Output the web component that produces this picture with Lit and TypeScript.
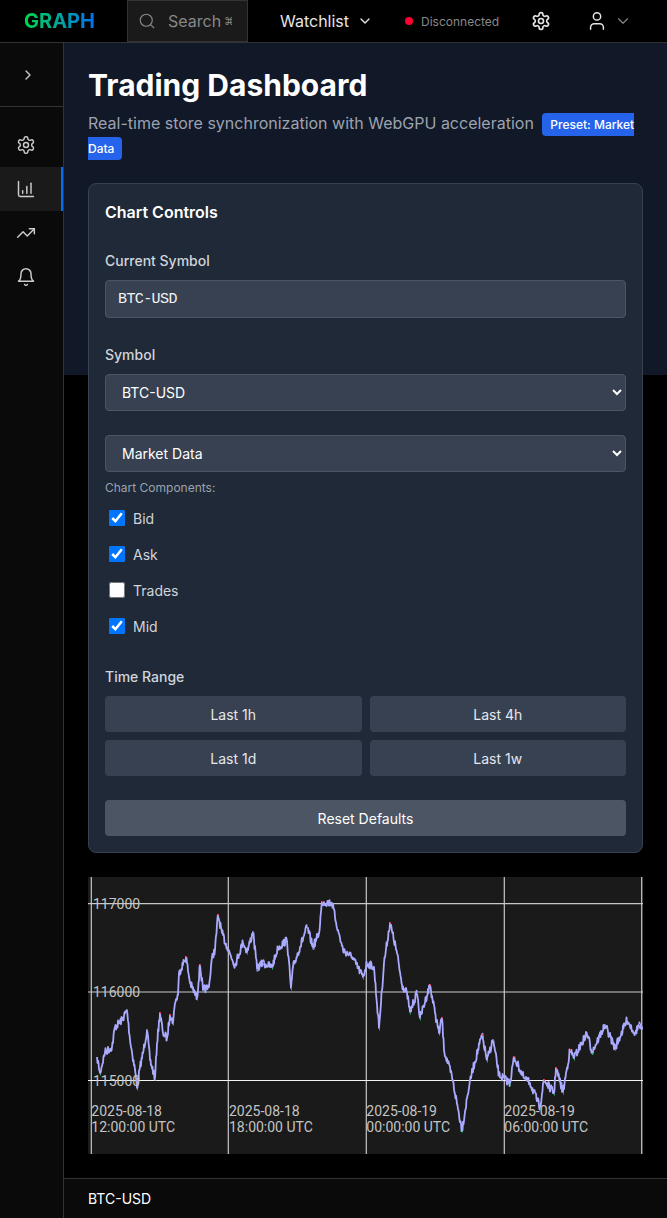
import { LitElement, css, html, svg } from 'lit';
import { customElement } from 'lit/decorators.js';

// hand-traced from the price line, in chart-local px
const TRACE: [number, number][] = [
  [9, 180], [12, 196], [17, 175], [24, 170], [27, 150], [34, 143], [39, 133], [42, 163], [47, 193], [49, 211],
  [52, 190], [55, 176], [59, 153], [62, 183], [67, 201], [69, 166], [72, 136], [75, 156], [79, 161], [82, 138],
  [85, 146], [87, 126], [90, 118], [91, 96], [98, 80], [102, 106], [109, 121], [112, 88], [115, 113], [121, 110],
  [124, 80], [127, 73], [130, 38], [134, 56], [139, 70], [147, 88], [155, 65], [159, 75], [165, 55], [169, 91],
  [175, 86], [184, 90], [190, 71], [199, 63], [203, 111], [205, 90], [212, 70], [219, 50], [225, 70], [231, 56],
  [234, 25], [244, 26], [250, 53], [255, 73], [264, 80], [275, 100], [279, 86], [286, 90], [291, 151], [296, 86],
  [302, 46], [309, 76], [314, 108], [319, 116], [322, 135], [329, 116], [332, 141], [342, 108], [347, 136],
  [351, 156], [354, 141], [356, 173], [364, 200], [374, 253], [382, 203], [394, 158], [399, 183], [405, 163],
  [411, 198], [422, 206], [426, 180], [436, 201], [442, 206], [452, 230], [456, 203], [466, 216], [468, 191],
  [475, 215], [482, 173], [486, 181], [499, 156], [504, 175], [517, 148], [527, 171], [539, 143], [547, 156],
  [551, 148], [555, 156],
];

function noisyLine(): string {
  let seed = 7;
  const rnd = () => {
    seed = (seed * 16807) % 2147483647;
    return seed / 2147483647 - 0.5;
  };
  const pts: string[] = [];
  for (let i = 0; i < TRACE.length - 1; i++) {
    const [x0, y0] = TRACE[i];
    const [x1, y1] = TRACE[i + 1];
    const steps = Math.max(2, Math.round(x1 - x0) * 2);
    for (let s = 0; s < steps; s++) {
      const t = s / steps;
      const x = x0 + (x1 - x0) * t;
      const y = y0 + (y1 - y0) * t + rnd() * 8 * (s === 0 ? 0 : 1);
      pts.push(`${x.toFixed(1)},${y.toFixed(1)}`);
    }
  }
  return pts.join(' ');
}

const GEAR = svg`<path d="M12.22 2h-.44a2 2 0 0 0-2 2v.18a2 2 0 0 1-1 1.73l-.43.25a2 2 0 0 1-2 0l-.15-.08a2 2 0 0 0-2.73.73l-.22.38a2 2 0 0 0 .73 2.73l.15.1a2 2 0 0 1 1 1.72v.51a2 2 0 0 1-1 1.74l-.15.09a2 2 0 0 0-.73 2.73l.22.38a2 2 0 0 0 2.73.73l.15-.08a2 2 0 0 1 2 0l.43.25a2 2 0 0 1 1 1.73V20a2 2 0 0 0 2 2h.44a2 2 0 0 0 2-2v-.18a2 2 0 0 1 1-1.73l.43-.25a2 2 0 0 1 2 0l.15.08a2 2 0 0 0 2.73-.73l.22-.39a2 2 0 0 0-.73-2.73l-.15-.08a2 2 0 0 1-1-1.74v-.5a2 2 0 0 1 1-1.74l.15-.09a2 2 0 0 0 .73-2.73l-.22-.38a2 2 0 0 0-2.73-.73l-.15.08a2 2 0 0 1-2 0l-.43-.25a2 2 0 0 1-1-1.73V4a2 2 0 0 0-2-2z"/><circle cx="12" cy="12" r="3"/>`;
const CHEVRON_DOWN = svg`<path d="m6 9 6 6 6-6"/>`;

@customElement('app-root')
export class AppRoot extends LitElement {
  static override styles = css`
    :host {
      display: block;
      background: #000;
      color: #fff;
      font-family: Inter, 'Noto Sans', sans-serif;
      min-height: 1218px;
    }
    * {
      box-sizing: border-box;
    }
    svg.icon {
      fill: none;
      stroke: currentColor;
      stroke-width: 2;
      stroke-linecap: round;
      stroke-linejoin: round;
      display: block;
      flex: none;
    }

    header {
      height: 43px;
      border-bottom: 1px solid #333;
      display: flex;
      align-items: center;
      background: #000;
    }
    .logo {
      width: 127px;
      padding-left: 24px;
      font-size: 20px;
      font-weight: 700;
    }
    .logo span {
      background: linear-gradient(90deg, #00d84a, #0070f3);
      -webkit-background-clip: text;
      background-clip: text;
      color: transparent;
    }
    .search {
      width: 121px;
      height: 42px;
      background: #1a1a1a;
      border: 1px solid #333;
      display: flex;
      align-items: center;
      padding-left: 10px;
      gap: 12px;
      color: #888;
      font-size: 16px;
      overflow: hidden;
      white-space: nowrap;
    }
    .search .kbd {
      margin-left: -9px;
      font-size: 11px;
      width: 8px;
      overflow: hidden;
      flex: none;
    }
    .watch {
      margin-left: 32px;
      display: flex;
      align-items: center;
      gap: 8px;
      color: #e5e5e5;
      font-size: 16px;
      width: 125px;
    }
    .status {
      display: flex;
      align-items: center;
      gap: 8px;
      font-size: 12px;
      color: #888;
      width: 126px;
    }
    .dot {
      width: 8px;
      height: 8px;
      border-radius: 50%;
      background: #ff0033;
    }
    .gear {
      color: #e5e5e5;
      width: 55px;
    }
    .user {
      display: flex;
      align-items: center;
      gap: 6px;
      color: #e5e5e5;
    }
    .user .chev {
      color: #888;
    }

    .body {
      display: flex;
      height: 1175px;
    }
    .side {
      width: 64px;
      background: #0a0a0a;
      border-right: 1px solid #333;
      flex: none;
      color: #ccc;
    }
    .toggle {
      height: 64px;
      border-bottom: 1px solid #333;
      display: flex;
      align-items: center;
      padding-left: 20px;
      margin-bottom: 16px;
    }
    .nav {
      height: 44px;
      display: flex;
      align-items: center;
      padding-left: 16px;
    }
    .nav.active {
      background: #1a1a1a;
      border-right: 2px solid #0070f3;
    }

    main {
      flex: 1;
      min-width: 0;
      display: flex;
      flex-direction: column;
      background: linear-gradient(#111827, #111827) no-repeat top / 100% 332px;
    }
    .content {
      flex: 1;
      padding: 24px 24px 0;
    }
    h1 {
      margin: 0;
      font-size: 30px;
      line-height: 36px;
      font-weight: 700;
    }
    .sub {
      margin: 8px 0 24px;
      color: #9ca3af;
      font-size: 16px;
      line-height: 24px;
    }
    .badge {
      margin-left: 4px;
      padding: 4px 8px;
      background: #2563eb;
      color: #fff;
      font-size: 12px;
      line-height: 16px;
      font-weight: 500;
      border-radius: 4px;
    }

    .card {
      background: #1f2937;
      border: 1px solid #374151;
      border-radius: 8px;
      padding: 16px;
      height: 670px;
    }
    h2 {
      margin: 0 0 27px;
      font-size: 16px;
      line-height: 24px;
      font-weight: 600;
    }
    label.field {
      display: block;
      font-size: 14px;
      line-height: 20px;
      font-weight: 500;
      color: #d1d5db;
      margin-bottom: 9px;
    }
    .value {
      height: 38px;
      background: #374151;
      border: 1px solid #4b5563;
      border-radius: 4px;
      padding: 0 12px;
      display: flex;
      align-items: center;
      font-family: 'Liberation Mono', monospace;
      font-size: 15px;
      letter-spacing: -0.6px;
      color: #f3f4f6;
      margin-bottom: 27px;
    }
    select {
      display: block;
      width: 100%;
      height: 37px;
      background: #374151;
      border: 1px solid #4b5563;
      border-radius: 4px;
      padding: 0 12px;
      color: #fff;
      font-family: inherit;
      font-size: 14px;
      font-weight: 400;
    }
    .gap {
      margin-bottom: 24px;
    }
    .hint {
      font-size: 12px;
      line-height: 16px;
      color: #9ca3af;
      margin: 8px 0 12px;
    }
    .checks {
      display: flex;
      flex-direction: column;
      gap: 16px;
      padding-left: 4px;
      margin-bottom: 31px;
    }
    .checks label {
      display: flex;
      align-items: center;
      gap: 8px;
      height: 20px;
      font-size: 14px;
      color: #d1d5db;
    }
    .checks input {
      width: 16px;
      height: 16px;
      margin: 0;
    }
    .range {
      display: grid;
      grid-template-columns: 1fr 1fr;
      gap: 8px;
      margin-bottom: 24px;
    }
    button {
      height: 36px;
      border: none;
      border-radius: 4px;
      background: #374151;
      color: #e5e7eb;
      font-family: inherit;
      font-size: 14px;
      padding: 0;
    }
    button.reset {
      display: block;
      width: 100%;
      background: #4b5563;
      color: #fff;
      font-weight: 400;
    }

    .chart {
      display: block;
      margin-top: 24px;
      width: 555px;
      height: 277px;
      background: #1a1a1a;
    }
    .chart text {
      font-family: Roboto, sans-serif;
      font-size: 14px;
      fill: #c4c4c4;
    }

    footer {
      height: 40px;
      background: #0a0a0a;
      border-top: 1px solid #333;
      padding: 0 24px;
      display: flex;
      align-items: center;
      font-size: 14px;
      font-weight: 400;
      color: #fff;
    }
  `;

  private icon(size: number, body: unknown, stroke = 2) {
    return html`<svg class="icon" width=${size} height=${size} viewBox="0 0 24 24" style="stroke-width:${stroke}">${body}</svg>`;
  }

  private renderChart() {
    const hLines = [
      { y: 26.7, label: '117000', color: '#c8c8c8' },
      { y: 115, label: '116000', color: '#c8c8c8' },
      { y: 203.5, label: '115000', color: '#f4f4f4' },
    ];
    const vLines = [
      { x: 3.3, tx: 3.3, date: '2025-08-18', time: '12:00:00 UTC' },
      { x: 140.3, tx: 141, date: '2025-08-18', time: '18:00:00 UTC' },
      { x: 278.3, tx: 278.3, date: '2025-08-19', time: '00:00:00 UTC' },
      { x: 416.3, tx: 416.3, date: '2025-08-19', time: '06:00:00 UTC' },
      { x: 553.7, tx: 553.7, date: '', time: '' },
    ];
    // tiny bid/ask ticks on the local extremes of the line
    const ticks = TRACE.slice(1, -1).flatMap(([x, y], i) => {
      const prev = TRACE[i][1];
      const next = TRACE[i + 2][1];
      if (y < prev && y < next) return [{ x, y: y - 1, c: '#e0304a' }];
      if (y > prev && y > next) return [{ x, y: y + 1, c: '#20b060' }];
      return [];
    });
    return html`<svg class="chart" viewBox="0 0 555 277" width="555" height="277">
      ${vLines.map(
        (v) => svg`<line x1=${v.x} x2=${v.x} y1="0" y2="277" stroke="#c8c8c8" stroke-width="1.2"></line>`,
      )}
      ${hLines.map(
        (h) => svg`<line x1="0" x2="555" y1=${h.y} y2=${h.y} stroke=${h.color} stroke-width="1.2"></line>`,
      )}
      <polyline points=${noisyLine()} fill="none" stroke="#aaaaff" stroke-width="1.8" stroke-linejoin="round"></polyline>
      ${ticks.map((t) => svg`<rect x=${t.x} y=${t.y} width="1" height="1.5" fill=${t.c}></rect>`)}
      ${hLines.map((h) => svg`<text x="5" y=${h.y + 5}>${h.label}</text>`)}
      ${vLines.map(
        (v) => svg`<text x=${v.tx} y="239">${v.date}</text><text x=${v.tx} y="255">${v.time}</text>`,
      )}
    </svg>`;
  }

  override render() {
    return html`
      <header>
        <div class="logo"><span>GRAPH</span></div>
        <div class="search">
          ${this.icon(18, svg`<circle cx="11" cy="11" r="8"/><path d="m21 21-4.3-4.3"/>`, 1.5)}
          <span>Search</span>
          <span class="kbd">⌘K</span>
        </div>
        <div class="watch">Watchlist ${this.icon(16, CHEVRON_DOWN)}</div>
        <div class="status"><span class="dot"></span>Disconnected</div>
        <div class="gear">${this.icon(20, GEAR)}</div>
        <div class="user">
          ${this.icon(22, svg`<path d="M19 21v-2a4 4 0 0 0-4-4H9a4 4 0 0 0-4 4v2"/><circle cx="12" cy="7" r="4"/>`, 1.6)}
          <span class="chev">${this.icon(18, CHEVRON_DOWN, 1.5)}</span>
        </div>
      </header>
      <div class="body">
        <aside class="side">
          <div class="toggle">${this.icon(16, svg`<path d="m9 18 6-6-6-6"/>`)}</div>
          <div class="nav">${this.icon(20, GEAR, 1.75)}</div>
          <div class="nav active">
            ${this.icon(20, svg`<path d="M3 3v16a2 2 0 0 0 2 2h16"/><path d="M8 17v-3"/><path d="M13 17V9"/><path d="M18 17V5"/>`, 1.75)}
          </div>
          <div class="nav">
            ${this.icon(20, svg`<path d="M22 7 13.5 15.5l-5-5L2 17"/><path d="M16 7h6v6"/>`, 1.75)}
          </div>
          <div class="nav">
            ${this.icon(20, svg`<path d="M6 8a6 6 0 0 1 12 0c0 7 3 9 3 9H3s3-2 3-9"/><path d="M10.3 21a1.94 1.94 0 0 0 3.4 0"/>`, 1.75)}
          </div>
        </aside>
        <main>
          <div class="content">
            <h1>Trading Dashboard</h1>
            <p class="sub">
              Real-time store synchronization with WebGPU acceleration
              <span class="badge">Preset: Market Data</span>
            </p>
            <section class="card">
              <h2>Chart Controls</h2>
              <label class="field">Current Symbol</label>
              <div class="value">BTC-USD</div>
              <label class="field">Symbol</label>
              <select class="gap"><option>BTC-USD</option></select>
              <select><option>Market Data</option></select>
              <div class="hint">Chart Components:</div>
              <div class="checks">
                <label><input type="checkbox" checked />Bid</label>
                <label><input type="checkbox" checked />Ask</label>
                <label><input type="checkbox" />Trades</label>
                <label><input type="checkbox" checked />Mid</label>
              </div>
              <label class="field">Time Range</label>
              <div class="range">
                <button>Last 1h</button>
                <button>Last 4h</button>
                <button>Last 1d</button>
                <button>Last 1w</button>
              </div>
              <button class="reset">Reset Defaults</button>
            </section>
            ${this.renderChart()}
          </div>
          <footer>BTC-USD</footer>
        </main>
      </div>
    `;
  }
}
